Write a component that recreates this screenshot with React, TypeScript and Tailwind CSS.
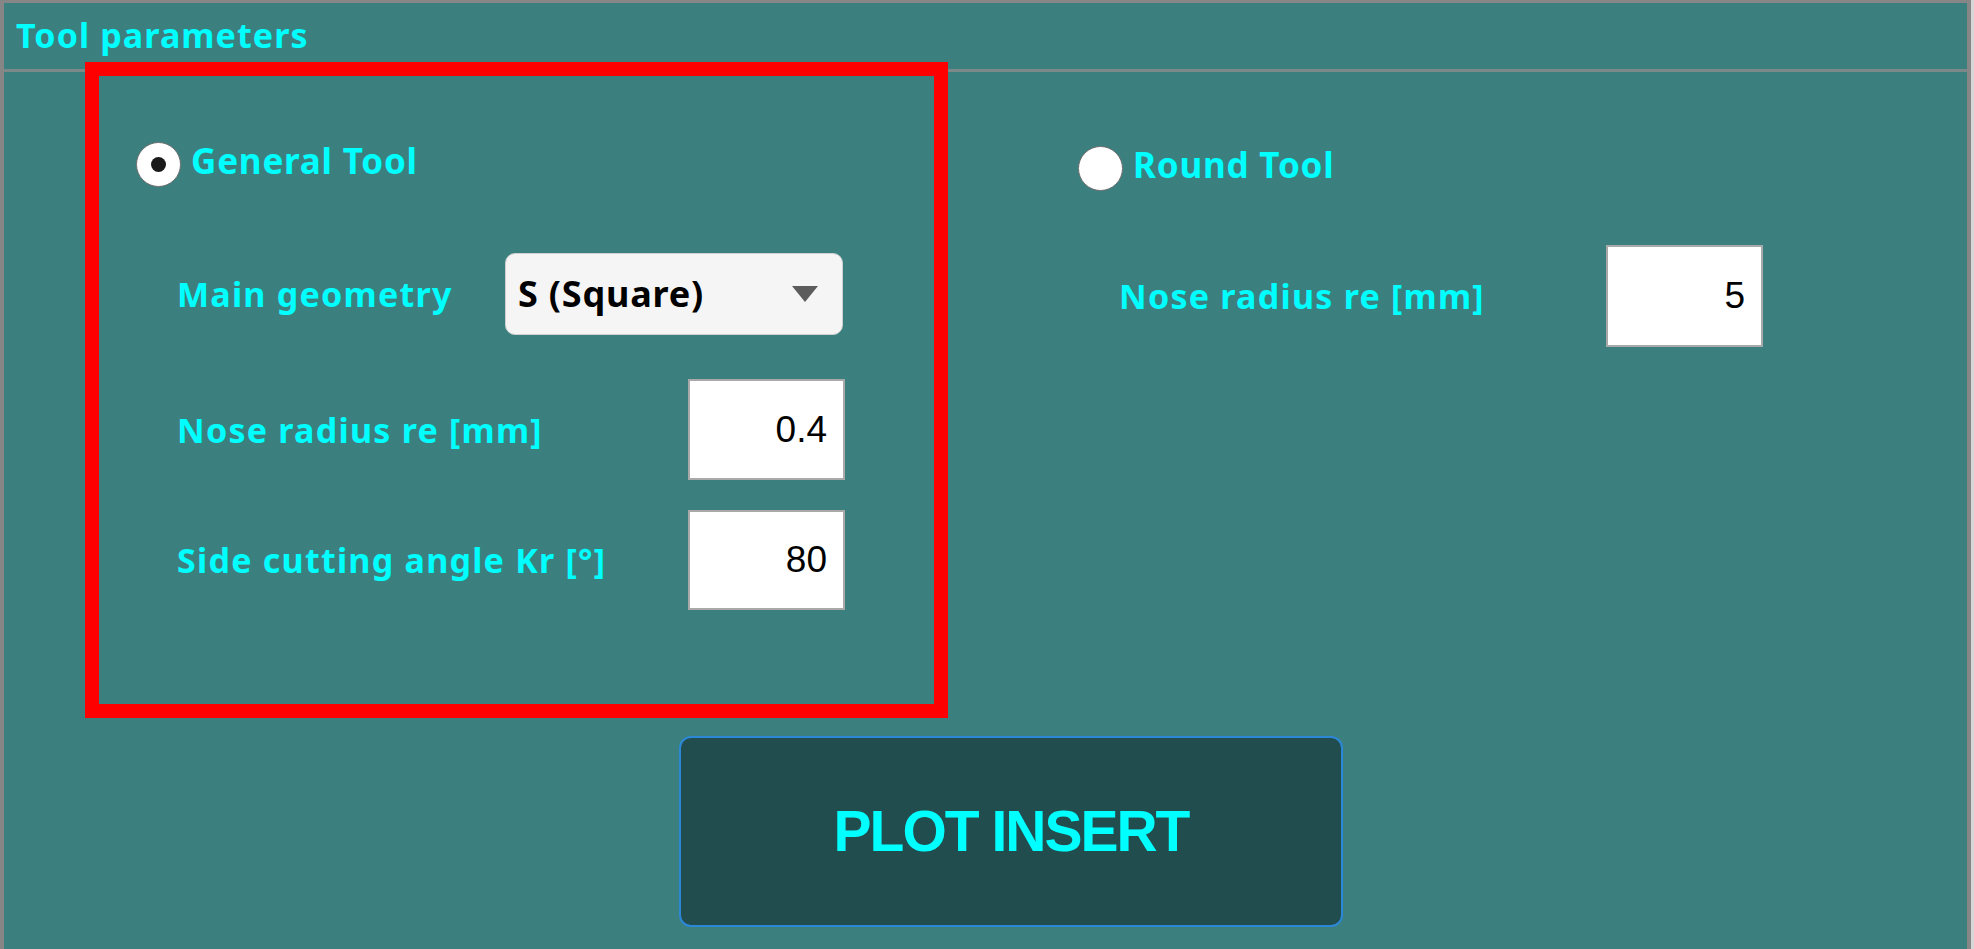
import { ReactNode } from 'react'

const Radio = ({ label, checked }: { label: string; checked?: boolean }) => (
  <div className="flex h-[45px] items-center gap-[10px]">
    <span className="flex h-[45px] w-[45px] items-center justify-center rounded-full border border-[#6f6f6f] bg-white">
      {checked && <span className="h-[15px] w-[15px] rounded-full bg-[#1b1b1b]" />}
    </span>
    <span className="mb-[8px] text-[35px] font-bold leading-none tracking-[0.8px] text-[#00ffff]">{label}</span>
  </div>
)

const Field = ({ label, children, width }: { label: string; children: ReactNode; width: string }) => (
  <div className={`flex items-center justify-between pl-[41px] ${width}`}>
    <span className="text-[34px] font-bold leading-none tracking-[1.25px] text-[#00ffff]">{label}</span>
    {children}
  </div>
)

const NumberBox = ({ value, h }: { value: string; h: string }) => (
  <input
    readOnly
    value={value}
    className={`w-[157px] ${h} border-2 border-[#a9a9a9] bg-white pr-[16px] text-right font-['Liberation_Sans',Arial,sans-serif] text-[37px] text-black outline-none`}
  />
)

export default function App() {
  return (
    <div className="relative flex h-[949px] w-[1974px] overflow-hidden bg-[#d6d6d6] font-['Noto_Sans',sans-serif]">
      <div className="flex h-full w-[1971px] flex-col border-l-4 border-r-4 border-t-[3px] border-[#868686] bg-[#3c7f7f]">
        <header className="h-[66px] pl-3 pt-[15px]">
          <h2 className="text-[34px] font-bold leading-none tracking-[1.1px] text-[#00ffff]">Tool parameters</h2>
        </header>
        <div className="h-[3px] bg-[#7c8989]" />

        <div className="flex flex-col">
          <div className="flex">
            {/* general tool */}
            <div className="ml-[132px] flex w-[942px] flex-col pt-[70px]">
              <Radio label="General Tool" checked />
              <div className="mt-[66px]">
                <Field label="Main geometry" width="w-[707px]">
                  <div className="flex h-[82px] w-[338px] items-center justify-between rounded-[10px] border border-[#d0d0d0] bg-[#f5f5f5] pl-[12px] pr-[24px]">
                    <span className="text-[36px] font-bold leading-none tracking-[0.8px] text-black">S (Square)</span>
                    <svg width="26" height="16" viewBox="0 0 26 16">
                      <polygon points="0,0 26,0 13,16" fill="#5c5c5c" />
                    </svg>
                  </div>
                </Field>
              </div>
              <div className="mt-[44px]">
                <Field label="Nose radius re [mm]" width="w-[709px]">
                  <NumberBox value="0.4" h="h-[101px]" />
                </Field>
              </div>
              <div className="mt-[30px]">
                <Field label="Side cutting angle Kr [°]" width="w-[709px]">
                  <NumberBox value="80" h="h-[100px]" />
                </Field>
              </div>
            </div>

            {/* round tool */}
            <div className="flex flex-col pt-[74px]">
              <Radio label="Round Tool" />
              <div className="mt-[54px]">
                <Field label="Nose radius re [mm]" width="w-[685px]">
                  <NumberBox value="5" h="h-[102px]" />
                </Field>
              </div>
            </div>
          </div>

          <button className="ml-[675px] mt-[126px] flex h-[191px] w-[664px] items-center justify-center rounded-[12px] border-2 border-[#2c88d6] bg-[#224d4e]">
            <span className="font-['Liberation_Sans',Arial,sans-serif] text-[57px] font-bold leading-none tracking-[-2px] text-[#00ffff]">
              PLOT INSERT
            </span>
          </button>
        </div>
      </div>

      {/* annotation frame */}
      <div className="pointer-events-none absolute left-[85px] top-[62px] h-[656px] w-[863px] border-[14px] border-[#ff0000]" />
    </div>
  )
}
